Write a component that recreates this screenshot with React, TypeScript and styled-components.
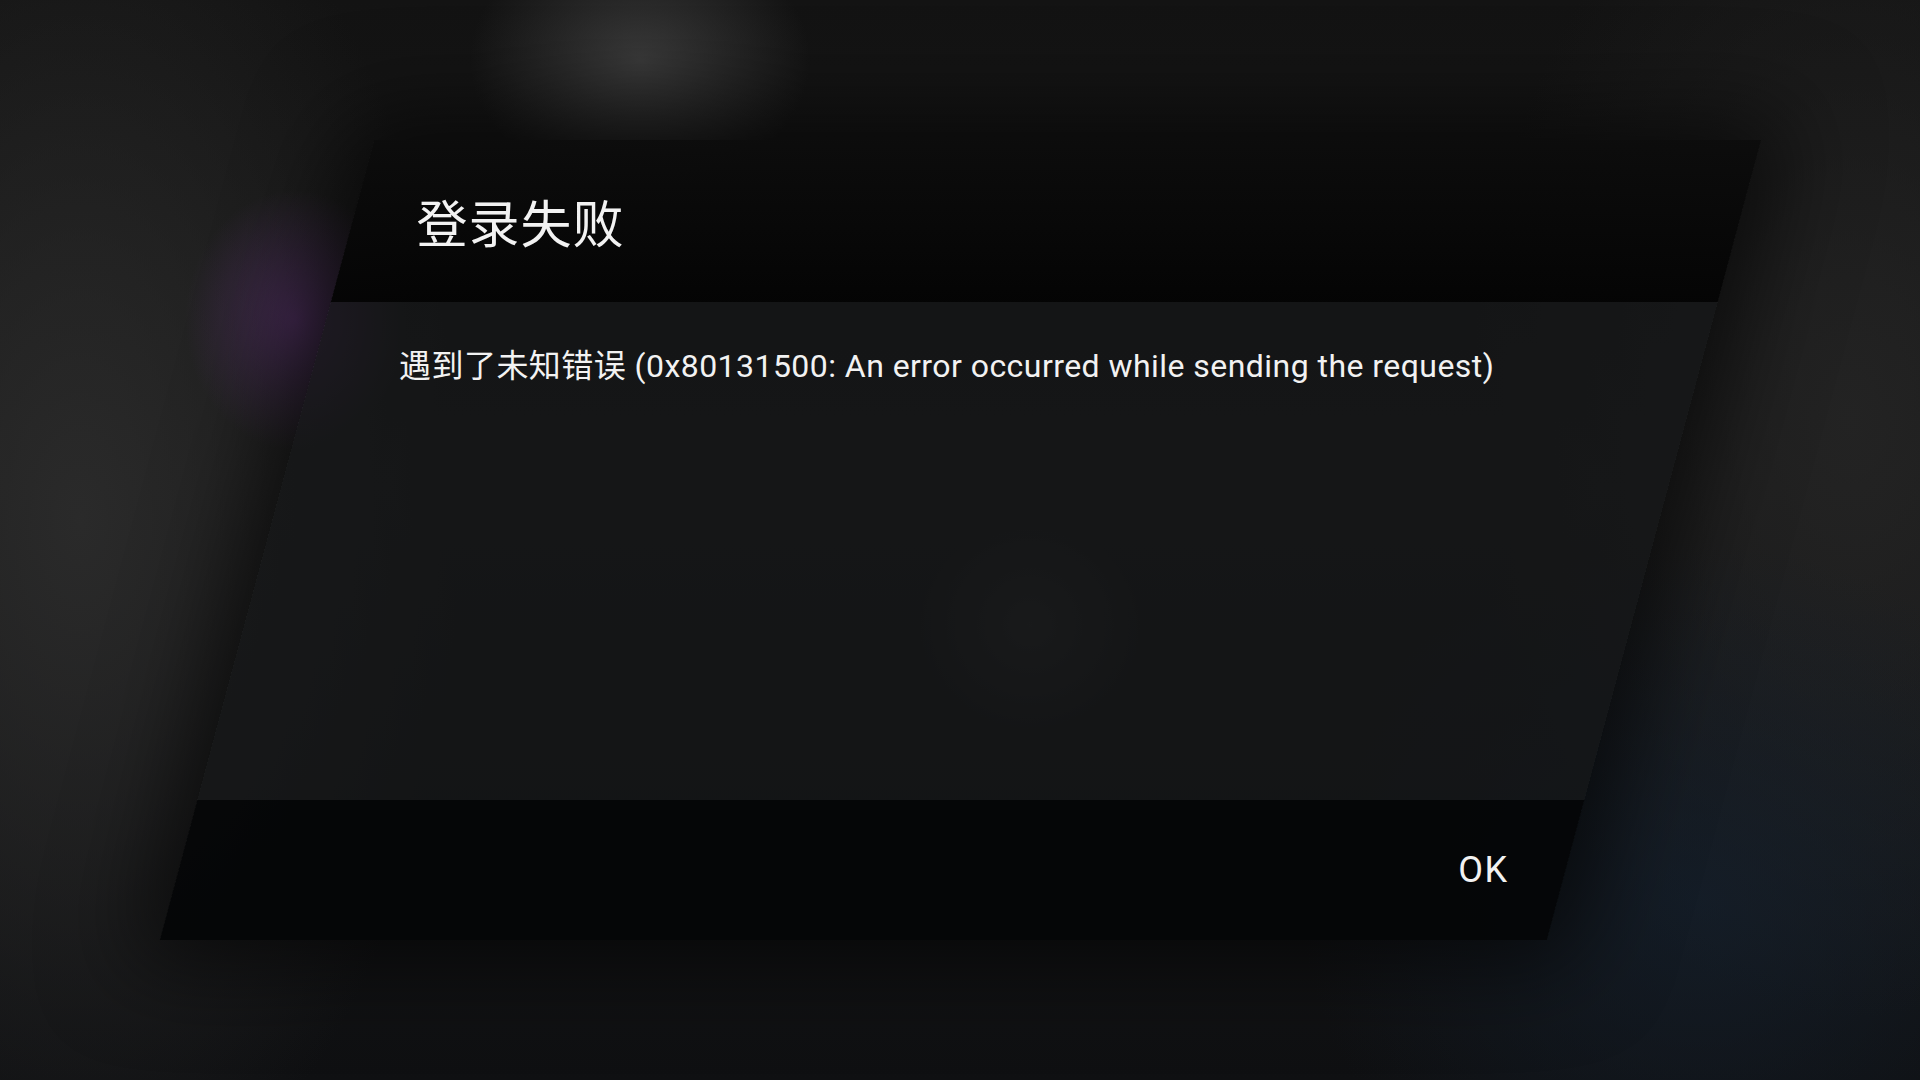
import styled, { createGlobalStyle } from "styled-components";

const GlobalStyle = createGlobalStyle`
  html, body {
    margin: 0;
    padding: 0;
    width: 100%;
    height: 100%;
    overflow: hidden;
    background: #121212;
  }
  #root {
    height: 100%;
  }
`;

const SKEW = 15;

const Screen = styled.div`
  position: relative;
  width: 1920px;
  height: 1080px;
  overflow: hidden;
  box-sizing: border-box;
  padding-top: 140px;
  display: flex;
  justify-content: center;
  align-items: flex-start;
  font-family: "Roboto", "Noto Sans CJK SC", sans-serif;
  color: #f2f2f2;
  background:
    radial-gradient(ellipse 170px 130px at 640px 60px, rgba(70, 70, 70, 0.75), rgba(70, 70, 70, 0) 100%),
    radial-gradient(ellipse 110px 130px at 295px 320px, rgba(90, 48, 112, 0.6), rgba(90, 48, 112, 0) 100%),
    radial-gradient(ellipse 110px 110px at 1030px 625px, rgba(46, 46, 46, 0.8), rgba(46, 46, 46, 0) 100%),
    radial-gradient(ellipse 400px 360px at 1700px 900px, rgba(20, 32, 46, 0.7), rgba(20, 32, 46, 0) 100%),
    radial-gradient(ellipse 380px 700px at 80px 520px, rgba(44, 44, 44, 0.9), rgba(44, 44, 44, 0) 100%),
    radial-gradient(ellipse 380px 600px at 1850px 420px, rgba(36, 36, 36, 0.9), rgba(36, 36, 36, 0) 100%),
    linear-gradient(180deg, #131313 0%, #1a1a1a 45%, #0f1012 100%);
`;

const Dialog = styled.div`
  width: 1387px;
  height: 800px;
  display: flex;
  flex-direction: column;
  transform: skewX(-${SKEW}deg);
  box-shadow: 0 0 90px 24px rgba(0, 0, 0, 0.6);
`;

const Band = styled.div<{ $height?: number; $bg: string }>`
  ${(p) => (p.$height ? `height: ${p.$height}px; flex: none;` : "flex: 1;")}
  background: ${(p) => p.$bg};
  display: flex;
`;

const Unskew = styled.div<{ $align: string; $justify: string; $pad: string }>`
  flex: 1;
  display: flex;
  align-items: ${(p) => p.$align};
  justify-content: ${(p) => p.$justify};
  padding: ${(p) => p.$pad};
  transform: skewX(${SKEW}deg);
`;

const Title = styled.h1`
  margin: 0;
  font-family: "Noto Sans CJK SC", sans-serif;
  font-size: 51px;
  font-weight: 400;
  line-height: 1;
  letter-spacing: 1px;
`;

const Message = styled.p`
  margin: 0;
  font-size: 32px;
  font-weight: 400;
  line-height: 1.3;
  letter-spacing: 0.45px;
`;

const OkButton = styled.button`
  background: none;
  border: none;
  padding: 0;
  color: #f2f2f2;
  font-family: "Roboto", sans-serif;
  font-size: 36px;
  font-weight: 400;
  letter-spacing: 1.5px;
  cursor: pointer;
`;

export default function App() {
  return (
    <>
      <GlobalStyle />
      <Screen>
        <Dialog>
          <Band $height={162} $bg="linear-gradient(180deg, rgba(12,12,12,0.97), rgba(4,4,4,0.98))">
            <Unskew $align="center" $justify="flex-start" $pad="0 0 0 64px">
              <Title>登录失败</Title>
            </Unskew>
          </Band>
          <Band $bg="rgba(20, 21, 22, 0.76)">
            <Unskew $align="flex-start" $justify="flex-start" $pad="44px 0 0 135px">
              <Message>
                遇到了未知错误 (0x80131500: An error occurred while sending the request)
              </Message>
            </Unskew>
          </Band>
          <Band $height={140} $bg="rgba(5, 6, 7, 0.97)">
            <Unskew $align="center" $justify="flex-end" $pad="0 57px 0 0">
              <OkButton>OK</OkButton>
            </Unskew>
          </Band>
        </Dialog>
      </Screen>
    </>
  );
}
